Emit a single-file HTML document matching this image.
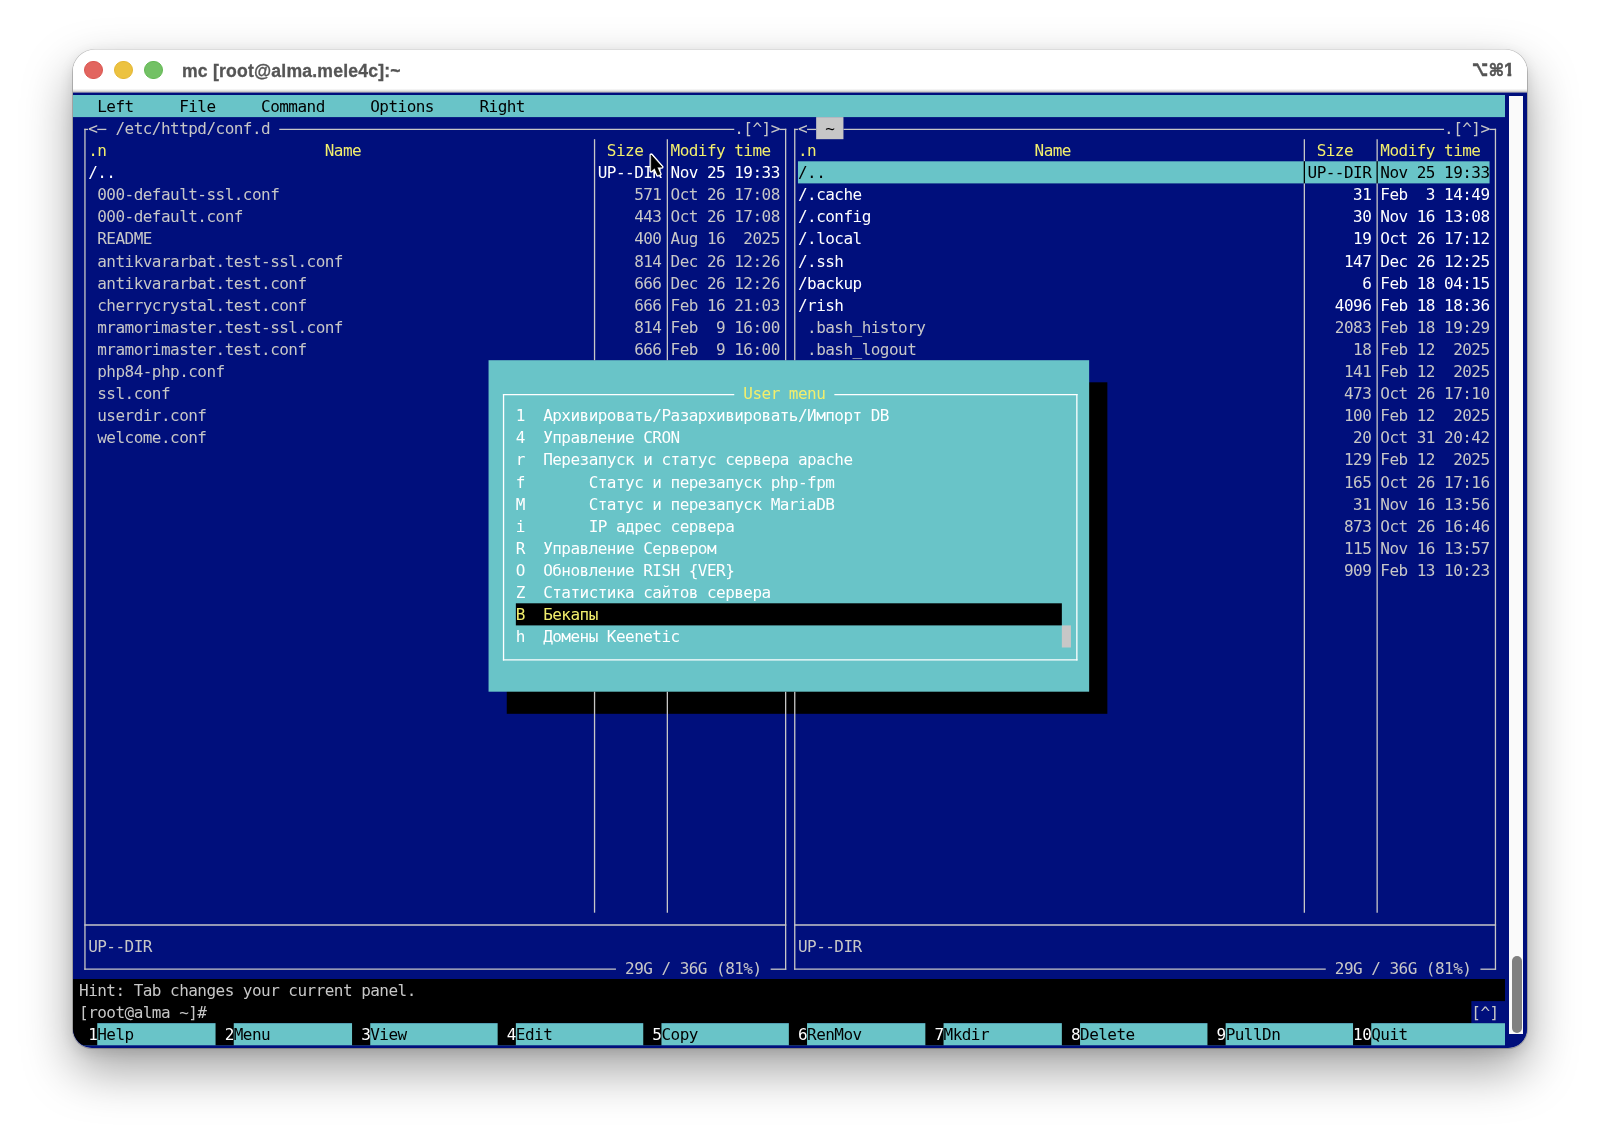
<!DOCTYPE html>
<html lang="ru"><head><meta charset="utf-8"><title>mc [root@alma.mele4c]:~</title>
<style>
html,body{margin:0;padding:0;background:#fff;}
body{width:1600px;height:1144px;position:relative;overflow:hidden;}
#shadow{position:absolute;left:73px;top:49.5px;width:1454px;height:998px;border-radius:22px 22px 19px 19px;
 background:linear-gradient(#fff 0,#fff 60px,#000f7c 60px);
 box-shadow:0 22px 50px 0 rgba(0,0,0,0.37),0 0 0 1px rgba(0,0,0,0.2),0 4px 14px rgba(0,0,0,0.11);}
#win{position:absolute;left:0;top:0;width:1600px;height:1144px;clip-path:inset(49.5px 73px 96.5px 73px round 22px 22px 19px 19px);
 background:linear-gradient(#fff 0,#fff 88.6px,#e8e8e8 90.4px,#cdcbc7 91.5px,#8f90b0 92.3px,#000f7c 93.3px);}
.tl{position:absolute;top:61.1px;width:18.4px;height:18.4px;border-radius:50%;box-sizing:border-box;border:1px solid;}
#title{position:absolute;left:182.3px;top:58.5px;font:bold 17.6px/24px "Liberation Sans",sans-serif;letter-spacing:0.2px;color:#555;-webkit-text-stroke:0.3px #555;white-space:pre;will-change:transform;}
#wn{position:absolute;left:0;top:0;will-change:transform;color:#555;}
#wn span{position:absolute;white-space:pre;line-height:24px;height:24px;font-weight:bold;transform-origin:0 0;}
#wn .s{font-family:"DejaVu Sans",sans-serif;}
#wn .n{font-family:"Liberation Sans",sans-serif;font-size:18.2px;}
#bg{position:absolute;left:0;top:0;}
#t{position:absolute;left:0;top:0;width:1600px;height:1144px;will-change:transform;}
#t span{position:absolute;white-space:pre;font:16px/22.1px "DejaVu Sans Mono","Liberation Mono",monospace;letter-spacing:-0.533px;height:22.1px;}
.g{color:#c7c7c7;} .w{color:#ffffff;} .y{color:#f2ee6c;} .k{color:#000000;}
#sbt{position:absolute;left:1509.3px;top:96px;width:14.1px;height:937.7px;background:#fafafa;}
#sbh{position:absolute;left:1511.9px;top:956px;width:10px;height:77px;border-radius:5px;background:#808080;}
</style></head>
<body>
<div id="shadow"></div>
<div id="win">
<div class="tl" style="left:84.3px;background:#e2655f;border-color:#da5650"></div>
<div class="tl" style="left:114.2px;background:#ecc240;border-color:#e4b633"></div>
<div class="tl" style="left:144.2px;background:#73c165;border-color:#62b853"></div>
<div id="title">mc [root@alma.mele4c]:~</div>
<div id="wn"><span class="s" style="left:1471.85px;top:56.5px;font-size:21.7px;transform:scaleX(0.645);-webkit-text-stroke:0.5px #555">⌥</span><span class="s" style="left:1488.55px;top:57.7px;font-size:17px;-webkit-text-stroke:0.5px #555">⌘</span><span class="n" style="left:1503.9px;top:57.6px;-webkit-text-stroke:0.5px #555;clip-path:polygon(0 0,11px 0,11px 15.3px,7.4px 15.3px,7.4px 24px,3.6px 24px,3.6px 15.3px,0 15.3px)">1</span></div>
<svg id="bg" width="1600" height="1144" viewBox="0 0 1600 1144">
<rect x="73" y="95" width="1432" height="22.1" fill="#69c4c8"/>
<rect x="73" y="979" width="1432" height="44.2" fill="#000000"/>
<rect x="1471.35" y="1001.1" width="33.65" height="22.1" fill="#000f7c"/>
<rect x="73" y="1023.2" width="1432" height="22.1" fill="#69c4c8"/>
<rect x="73" y="1022.2" width="24.25" height="23.1" fill="#000000"/>
<rect x="215.55" y="1022.2" width="18.2" height="23.1" fill="#000000"/>
<rect x="352.05" y="1022.2" width="18.2" height="23.1" fill="#000000"/>
<rect x="497.65" y="1022.2" width="18.2" height="23.1" fill="#000000"/>
<rect x="643.25" y="1022.2" width="18.2" height="23.1" fill="#000000"/>
<rect x="788.85" y="1022.2" width="18.2" height="23.1" fill="#000000"/>
<rect x="925.35" y="1022.2" width="18.2" height="23.1" fill="#000000"/>
<rect x="1061.85" y="1022.2" width="18.2" height="23.1" fill="#000000"/>
<rect x="1207.45" y="1022.2" width="18.2" height="23.1" fill="#000000"/>
<rect x="1353.05" y="1022.2" width="18.2" height="23.1" fill="#000000"/>
<rect x="816.15" y="117.1" width="27.3" height="22.1" fill="#c7c7c7"/>
<rect x="797.95" y="161.3" width="691.6" height="22.1" fill="#69c4c8"/>
<rect x="506.75" y="382.3" width="600.6" height="331.5" fill="#000000"/>
<rect x="488.55" y="360.2" width="600.6" height="331.5" fill="#69c4c8"/>
<rect x="515.85" y="603.3" width="546" height="22.1" fill="#000000"/>
<rect x="1061.85" y="625.4" width="9.1" height="22.1" fill="#c7c7c7"/>
<line x1="84.3" y1="129.4" x2="88.15" y2="129.4" stroke="#c7c7c7" stroke-width="1.3"/>
<line x1="97.25" y1="129.4" x2="106.35" y2="129.4" stroke="#c7c7c7" stroke-width="1.3"/>
<line x1="279.25" y1="129.4" x2="734.25" y2="129.4" stroke="#c7c7c7" stroke-width="1.3"/>
<line x1="779.75" y1="129.4" x2="786.3" y2="129.4" stroke="#c7c7c7" stroke-width="1.3"/>
<line x1="794.1" y1="129.4" x2="797.95" y2="129.4" stroke="#c7c7c7" stroke-width="1.3"/>
<line x1="807.05" y1="129.4" x2="816.15" y2="129.4" stroke="#c7c7c7" stroke-width="1.3"/>
<line x1="843.45" y1="129.4" x2="1444.05" y2="129.4" stroke="#c7c7c7" stroke-width="1.3"/>
<line x1="1489.55" y1="129.4" x2="1496.1" y2="129.4" stroke="#c7c7c7" stroke-width="1.3"/>
<line x1="502.9" y1="394.6" x2="734.25" y2="394.6" stroke="#ffffff" stroke-width="1.3"/>
<line x1="834.35" y1="394.6" x2="1077.5" y2="394.6" stroke="#ffffff" stroke-width="1.3"/>
<line x1="502.9" y1="659.8" x2="1077.5" y2="659.8" stroke="#ffffff" stroke-width="1.3"/>
<line x1="84.3" y1="925" x2="786.3" y2="925" stroke="#c7c7c7" stroke-width="1.3"/>
<line x1="794.1" y1="925" x2="1496.1" y2="925" stroke="#c7c7c7" stroke-width="1.3"/>
<line x1="84.3" y1="969.2" x2="615.95" y2="969.2" stroke="#c7c7c7" stroke-width="1.3"/>
<line x1="770.65" y1="969.2" x2="786.3" y2="969.2" stroke="#c7c7c7" stroke-width="1.3"/>
<line x1="794.1" y1="969.2" x2="1325.75" y2="969.2" stroke="#c7c7c7" stroke-width="1.3"/>
<line x1="1480.45" y1="969.2" x2="1496.1" y2="969.2" stroke="#c7c7c7" stroke-width="1.3"/>
<line x1="84.95" y1="128.75" x2="84.95" y2="969.85" stroke="#c7c7c7" stroke-width="1.3"/>
<line x1="503.55" y1="393.95" x2="503.55" y2="660.45" stroke="#ffffff" stroke-width="1.3"/>
<line x1="594.55" y1="139.2" x2="594.55" y2="360.2" stroke="#c7c7c7" stroke-width="1.3"/>
<line x1="594.55" y1="691.7" x2="594.55" y2="912.7" stroke="#c7c7c7" stroke-width="1.3"/>
<line x1="667.35" y1="139.2" x2="667.35" y2="360.2" stroke="#c7c7c7" stroke-width="1.3"/>
<line x1="667.35" y1="691.7" x2="667.35" y2="912.7" stroke="#c7c7c7" stroke-width="1.3"/>
<line x1="785.65" y1="128.75" x2="785.65" y2="360.2" stroke="#c7c7c7" stroke-width="1.3"/>
<line x1="785.65" y1="691.7" x2="785.65" y2="969.85" stroke="#c7c7c7" stroke-width="1.3"/>
<line x1="794.75" y1="128.75" x2="794.75" y2="360.2" stroke="#c7c7c7" stroke-width="1.3"/>
<line x1="794.75" y1="691.7" x2="794.75" y2="969.85" stroke="#c7c7c7" stroke-width="1.3"/>
<line x1="1076.85" y1="393.95" x2="1076.85" y2="660.45" stroke="#ffffff" stroke-width="1.3"/>
<line x1="1304.35" y1="139.2" x2="1304.35" y2="161.3" stroke="#c7c7c7" stroke-width="1.3"/>
<line x1="1304.35" y1="161.3" x2="1304.35" y2="183.4" stroke="#000000" stroke-width="1.3"/>
<line x1="1304.35" y1="183.4" x2="1304.35" y2="912.7" stroke="#c7c7c7" stroke-width="1.3"/>
<line x1="1377.15" y1="139.2" x2="1377.15" y2="161.3" stroke="#c7c7c7" stroke-width="1.3"/>
<line x1="1377.15" y1="161.3" x2="1377.15" y2="183.4" stroke="#000000" stroke-width="1.3"/>
<line x1="1377.15" y1="183.4" x2="1377.15" y2="912.7" stroke="#c7c7c7" stroke-width="1.3"/>
<line x1="1495.45" y1="128.75" x2="1495.45" y2="969.85" stroke="#c7c7c7" stroke-width="1.3"/>
</svg>
<div id="sbt"></div><div id="sbh"></div>
<div id="t">
<span class="k" style="left:97.25px;top:95.85px">Left</span>
<span class="k" style="left:179.15px;top:95.85px">File</span>
<span class="k" style="left:261.05px;top:95.85px">Command</span>
<span class="k" style="left:370.25px;top:95.85px">Options</span>
<span class="k" style="left:479.45px;top:95.85px">Right</span>
<span class="g" style="left:88.15px;top:117.95px">&lt;</span>
<span class="g" style="left:115.45px;top:117.95px">/etc/httpd/conf.d</span>
<span class="g" style="left:734.25px;top:117.95px">.[^]&gt;</span>
<span class="g" style="left:797.95px;top:117.95px">&lt;</span>
<span class="k" style="left:825.25px;top:117.95px">~</span>
<span class="g" style="left:1444.05px;top:117.95px">.[^]&gt;</span>
<span class="y" style="left:88.15px;top:140.05px">.n</span>
<span class="y" style="left:324.75px;top:140.05px">Name</span>
<span class="y" style="left:606.85px;top:140.05px">Size</span>
<span class="y" style="left:670.55px;top:140.05px">Modify time</span>
<span class="y" style="left:797.95px;top:140.05px">.n</span>
<span class="y" style="left:1034.55px;top:140.05px">Name</span>
<span class="y" style="left:1316.65px;top:140.05px">Size</span>
<span class="y" style="left:1380.35px;top:140.05px">Modify time</span>
<span class="w" style="left:88.15px;top:162.15px">/..</span>
<span class="w" style="left:597.75px;top:162.15px">UP--DIR</span>
<span class="w" style="left:670.55px;top:162.15px">Nov 25 19:33</span>
<span class="k" style="left:797.95px;top:162.15px">/..</span>
<span class="k" style="left:1307.55px;top:162.15px">UP--DIR</span>
<span class="k" style="left:1380.35px;top:162.15px">Nov 25 19:33</span>
<span class="g" style="left:97.25px;top:184.25px">000-default-ssl.conf</span>
<span class="g" style="left:634.15px;top:184.25px">571</span>
<span class="g" style="left:670.55px;top:184.25px">Oct 26 17:08</span>
<span class="w" style="left:797.95px;top:184.25px">/.cache</span>
<span class="w" style="left:1353.05px;top:184.25px">31</span>
<span class="w" style="left:1380.35px;top:184.25px">Feb</span>
<span class="w" style="left:1425.85px;top:184.25px">3 14:49</span>
<span class="g" style="left:97.25px;top:206.35px">000-default.conf</span>
<span class="g" style="left:634.15px;top:206.35px">443</span>
<span class="g" style="left:670.55px;top:206.35px">Oct 26 17:08</span>
<span class="w" style="left:797.95px;top:206.35px">/.config</span>
<span class="w" style="left:1353.05px;top:206.35px">30</span>
<span class="w" style="left:1380.35px;top:206.35px">Nov 16 13:08</span>
<span class="g" style="left:97.25px;top:228.45px">README</span>
<span class="g" style="left:634.15px;top:228.45px">400</span>
<span class="g" style="left:670.55px;top:228.45px">Aug 16</span>
<span class="g" style="left:743.35px;top:228.45px">2025</span>
<span class="w" style="left:797.95px;top:228.45px">/.local</span>
<span class="w" style="left:1353.05px;top:228.45px">19</span>
<span class="w" style="left:1380.35px;top:228.45px">Oct 26 17:12</span>
<span class="g" style="left:97.25px;top:250.55px">antikvararbat.test-ssl.conf</span>
<span class="g" style="left:634.15px;top:250.55px">814</span>
<span class="g" style="left:670.55px;top:250.55px">Dec 26 12:26</span>
<span class="w" style="left:797.95px;top:250.55px">/.ssh</span>
<span class="w" style="left:1343.95px;top:250.55px">147</span>
<span class="w" style="left:1380.35px;top:250.55px">Dec 26 12:25</span>
<span class="g" style="left:97.25px;top:272.65px">antikvararbat.test.conf</span>
<span class="g" style="left:634.15px;top:272.65px">666</span>
<span class="g" style="left:670.55px;top:272.65px">Dec 26 12:26</span>
<span class="w" style="left:797.95px;top:272.65px">/backup</span>
<span class="w" style="left:1362.15px;top:272.65px">6</span>
<span class="w" style="left:1380.35px;top:272.65px">Feb 18 04:15</span>
<span class="g" style="left:97.25px;top:294.75px">cherrycrystal.test.conf</span>
<span class="g" style="left:634.15px;top:294.75px">666</span>
<span class="g" style="left:670.55px;top:294.75px">Feb 16 21:03</span>
<span class="w" style="left:797.95px;top:294.75px">/rish</span>
<span class="w" style="left:1334.85px;top:294.75px">4096</span>
<span class="w" style="left:1380.35px;top:294.75px">Feb 18 18:36</span>
<span class="g" style="left:97.25px;top:316.85px">mramorimaster.test-ssl.conf</span>
<span class="g" style="left:634.15px;top:316.85px">814</span>
<span class="g" style="left:670.55px;top:316.85px">Feb</span>
<span class="g" style="left:716.05px;top:316.85px">9 16:00</span>
<span class="g" style="left:807.05px;top:316.85px">.bash_history</span>
<span class="g" style="left:1334.85px;top:316.85px">2083</span>
<span class="g" style="left:1380.35px;top:316.85px">Feb 18 19:29</span>
<span class="g" style="left:97.25px;top:338.95px">mramorimaster.test.conf</span>
<span class="g" style="left:634.15px;top:338.95px">666</span>
<span class="g" style="left:670.55px;top:338.95px">Feb</span>
<span class="g" style="left:716.05px;top:338.95px">9 16:00</span>
<span class="g" style="left:807.05px;top:338.95px">.bash_logout</span>
<span class="g" style="left:1353.05px;top:338.95px">18</span>
<span class="g" style="left:1380.35px;top:338.95px">Feb 12</span>
<span class="g" style="left:1453.15px;top:338.95px">2025</span>
<span class="g" style="left:97.25px;top:361.05px">php84-php.conf</span>
<span class="g" style="left:1343.95px;top:361.05px">141</span>
<span class="g" style="left:1380.35px;top:361.05px">Feb 12</span>
<span class="g" style="left:1453.15px;top:361.05px">2025</span>
<span class="g" style="left:97.25px;top:383.15px">ssl.conf</span>
<span class="y" style="left:743.35px;top:383.15px">User menu</span>
<span class="g" style="left:1343.95px;top:383.15px">473</span>
<span class="g" style="left:1380.35px;top:383.15px">Oct 26 17:10</span>
<span class="g" style="left:97.25px;top:405.25px">userdir.conf</span>
<span class="w" style="left:515.85px;top:405.25px">1</span>
<span class="w" style="left:543.15px;top:405.25px">Архивировать/Разархивировать/Импорт DB</span>
<span class="g" style="left:1343.95px;top:405.25px">100</span>
<span class="g" style="left:1380.35px;top:405.25px">Feb 12</span>
<span class="g" style="left:1453.15px;top:405.25px">2025</span>
<span class="g" style="left:97.25px;top:427.35px">welcome.conf</span>
<span class="w" style="left:515.85px;top:427.35px">4</span>
<span class="w" style="left:543.15px;top:427.35px">Управление CRON</span>
<span class="g" style="left:1353.05px;top:427.35px">20</span>
<span class="g" style="left:1380.35px;top:427.35px">Oct 31 20:42</span>
<span class="w" style="left:515.85px;top:449.45px">r</span>
<span class="w" style="left:543.15px;top:449.45px">Перезапуск и статус сервера apache</span>
<span class="g" style="left:1343.95px;top:449.45px">129</span>
<span class="g" style="left:1380.35px;top:449.45px">Feb 12</span>
<span class="g" style="left:1453.15px;top:449.45px">2025</span>
<span class="w" style="left:515.85px;top:471.55px">f</span>
<span class="w" style="left:588.65px;top:471.55px">Статус и перезапуск php-fpm</span>
<span class="g" style="left:1343.95px;top:471.55px">165</span>
<span class="g" style="left:1380.35px;top:471.55px">Oct 26 17:16</span>
<span class="w" style="left:515.85px;top:493.65px">M</span>
<span class="w" style="left:588.65px;top:493.65px">Статус и перезапуск MariaDB</span>
<span class="g" style="left:1353.05px;top:493.65px">31</span>
<span class="g" style="left:1380.35px;top:493.65px">Nov 16 13:56</span>
<span class="w" style="left:515.85px;top:515.75px">i</span>
<span class="w" style="left:588.65px;top:515.75px">IP адрес сервера</span>
<span class="g" style="left:1343.95px;top:515.75px">873</span>
<span class="g" style="left:1380.35px;top:515.75px">Oct 26 16:46</span>
<span class="w" style="left:515.85px;top:537.85px">R</span>
<span class="w" style="left:543.15px;top:537.85px">Управление Сервером</span>
<span class="g" style="left:1343.95px;top:537.85px">115</span>
<span class="g" style="left:1380.35px;top:537.85px">Nov 16 13:57</span>
<span class="w" style="left:515.85px;top:559.95px">O</span>
<span class="w" style="left:543.15px;top:559.95px">Обновление RISH {VER}</span>
<span class="g" style="left:1343.95px;top:559.95px">909</span>
<span class="g" style="left:1380.35px;top:559.95px">Feb 13 10:23</span>
<span class="w" style="left:515.85px;top:582.05px">Z</span>
<span class="w" style="left:543.15px;top:582.05px">Статистика сайтов сервера</span>
<span class="y" style="left:515.85px;top:604.15px">B</span>
<span class="y" style="left:543.15px;top:604.15px">Бекапы</span>
<span class="w" style="left:515.85px;top:626.25px">h</span>
<span class="w" style="left:543.15px;top:626.25px">Домены Keenetic</span>
<span class="g" style="left:88.15px;top:935.65px">UP--DIR</span>
<span class="g" style="left:797.95px;top:935.65px">UP--DIR</span>
<span class="g" style="left:625.05px;top:957.75px">29G / 36G (81%)</span>
<span class="g" style="left:1334.85px;top:957.75px">29G / 36G (81%)</span>
<span class="g" style="left:79.05px;top:979.85px">Hint: Tab changes your current panel.</span>
<span class="g" style="left:79.05px;top:1001.95px">[root@alma ~]#</span>
<span class="g" style="left:1471.35px;top:1001.95px">[^]</span>
<span class="w" style="left:88.15px;top:1024.05px">1</span>
<span class="k" style="left:97.25px;top:1024.05px">Help</span>
<span class="w" style="left:224.65px;top:1024.05px">2</span>
<span class="k" style="left:233.75px;top:1024.05px">Menu</span>
<span class="w" style="left:361.15px;top:1024.05px">3</span>
<span class="k" style="left:370.25px;top:1024.05px">View</span>
<span class="w" style="left:506.75px;top:1024.05px">4</span>
<span class="k" style="left:515.85px;top:1024.05px">Edit</span>
<span class="w" style="left:652.35px;top:1024.05px">5</span>
<span class="k" style="left:661.45px;top:1024.05px">Copy</span>
<span class="w" style="left:797.95px;top:1024.05px">6</span>
<span class="k" style="left:807.05px;top:1024.05px">RenMov</span>
<span class="w" style="left:934.45px;top:1024.05px">7</span>
<span class="k" style="left:943.55px;top:1024.05px">Mkdir</span>
<span class="w" style="left:1070.95px;top:1024.05px">8</span>
<span class="k" style="left:1080.05px;top:1024.05px">Delete</span>
<span class="w" style="left:1216.55px;top:1024.05px">9</span>
<span class="k" style="left:1225.65px;top:1024.05px">PullDn</span>
<span class="w" style="left:1353.05px;top:1024.05px">10</span>
<span class="k" style="left:1371.25px;top:1024.05px">Quit</span>
</div>
<svg id="cur" style="position:absolute;left:648px;top:152px" width="20" height="28" viewBox="0 0 20 28">
<path d="M3.2 3 L3.2 18.9 L6.7 15.9 L9.8 23 L12 22.1 L9 15.1 L13.9 15.1 Z" fill="#fff" stroke="#fff" stroke-width="3.4" stroke-linejoin="round"/>
<path d="M3.2 3 L3.2 18.9 L6.7 15.9 L9.8 23 L12 22.1 L9 15.1 L13.9 15.1 Z" fill="#000" stroke="#000" stroke-width="0.8" stroke-linejoin="round"/></svg>
</div>
</body></html>
